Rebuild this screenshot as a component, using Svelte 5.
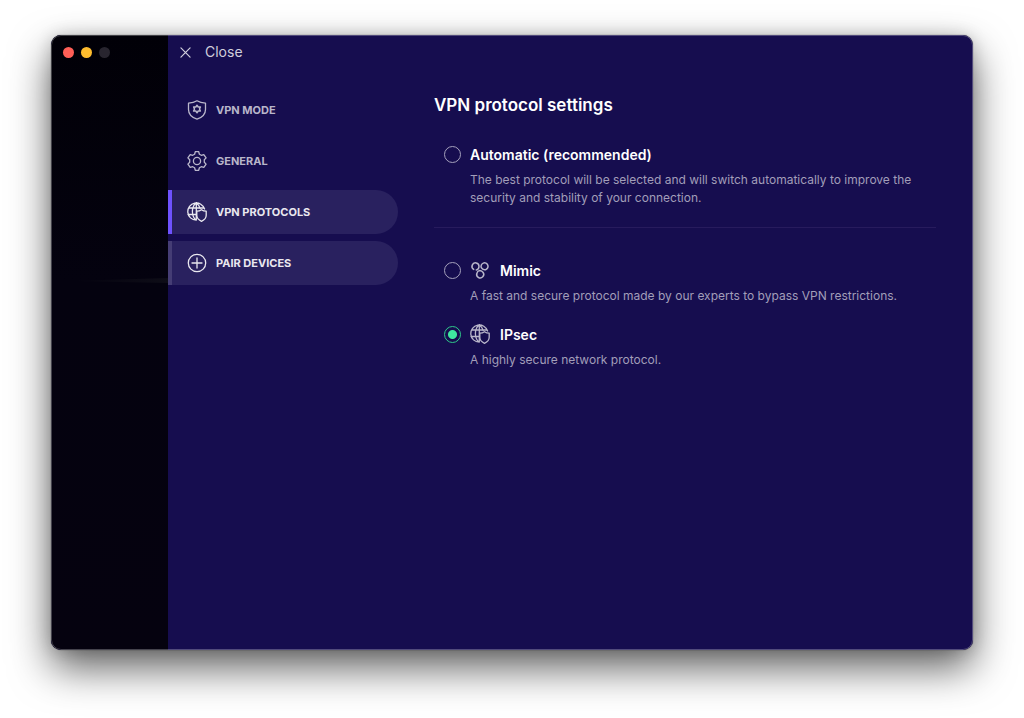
<script>
  const navItems = [
    { id: "mode", label: "VPN mode", icon: "shield" },
    { id: "general", label: "General", icon: "gear" },
    { id: "protocols", label: "VPN protocols", icon: "globe" },
    { id: "pair", label: "Pair devices", icon: "plus" },
  ];

  const protocols = [
    {
      id: "mimic",
      name: "Mimic",
      description:
        "A fast and secure protocol made by our experts to bypass VPN restrictions.",
    },
    {
      id: "ipsec",
      name: "IPsec",
      description: "A highly secure network protocol.",
    },
  ];

  let page = $state("protocols");
  let selected = $state("ipsec");
</script>

{#snippet globe()}
  <svg class="icon" viewBox="0 0 20 20" aria-hidden="true">
    <path
      d="M9.200 18.200A8.600 8.600 0 1 1 17.600 7M9 .9C6.400 3 5.400 6 5.400 9.500s.9 6 3.100 8.300M9.500.9c2 1.700 3.200 3.500 3.700 5.600M9.300 1v17M1.700 6h15.200M1 12.500h8"
    />
    <path d="M14.500 7.700c1.400 1 2.900 1.400 4.700 1.400v4.200c0 2.800-1.900 4.800-4.700 6-2.800-1.200-4.700-3.200-4.700-6V9.100c1.800 0 3.300-.4 4.700-1.400z" />
  </svg>
{/snippet}

<div class="window">
  <aside class="backdrop">
    <div class="lights">
      <button class="light red" aria-label="Close window"></button>
      <button class="light yellow" aria-label="Minimize window"></button>
      <button class="light off" aria-label="Zoom window" disabled></button>
    </div>
    <div class="glow"></div>
  </aside>

  <div class="panel">
    <header>
      <button class="close">
        <svg viewBox="0 0 12 12" aria-hidden="true">
          <path d="M1 1l10 10M11 1L1 11" />
        </svg>
        Close
      </button>
    </header>

    <div class="body">
      <nav>
        {#each navItems as item}
          <button
            class="nav-item"
            class:active={page === item.id}
            class:hover={item.id === "pair"}
            onclick={() => (page = item.id)}
          >
            {#if item.icon === "shield"}
              <svg class="icon" viewBox="0 0 20 20" aria-hidden="true">
                <path d="M10 .8c2.500 1.600 5.200 2.200 8.500 2.300v6.400c0 4.800-3.200 7.900-8.500 9.700-5.300-1.800-8.500-4.900-8.500-9.700V3.100C4.800 3 7.500 2.400 10 .8z" />
                <path class="bold" d="M10 5.300l1.200 1.700 2.200-.1-.9 2.100.9 2.100-2.200-.1L10 12.700 8.800 11l-2.200.1.9-2.100-.9-2.100 2.200.1z" />
              </svg>
            {:else if item.icon === "gear"}
              <svg class="icon" viewBox="0 0 20 20" aria-hidden="true">
                <path d="M8.300.7h3.400l.7 2.500 1.900 1.100 2.500-.7 2.300 3.300-1.800 1.900v2.400l1.800 1.900-2.300 3.300-2.500-.7-1.900 1.100-.7 2.500H8.300l-.7-2.500-1.900-1.100-2.500.7L.9 13.100l1.800-1.900V8.800L.9 6.900l2.300-3.300 2.500.7 1.900-1.100z" />
                <circle cx="10" cy="10" r="3.600" />
              </svg>
            {:else if item.icon === "globe"}
              {@render globe()}
            {:else}
              <svg class="icon" viewBox="0 0 20 20" aria-hidden="true">
                <circle cx="10" cy="10" r="8.700" />
                <path d="M10 5v10M5 10h10" />
              </svg>
            {/if}
            {item.label}
          </button>
        {/each}
      </nav>

      <main>
        <h1>VPN protocol settings</h1>

        <div class="option">
          <input
            type="radio"
            id="automatic"
            name="protocol"
            value="automatic"
            bind:group={selected}
          />
          <label for="automatic">Automatic (recommended)</label>
          <p>
            The best protocol will be selected and will switch automatically to
            improve the security and stability of your connection.
          </p>
        </div>

        <hr />

        {#each protocols as protocol}
          <div class="option">
            <input
              type="radio"
              id={protocol.id}
              name="protocol"
              value={protocol.id}
              bind:group={selected}
            />
            <label for={protocol.id}>
              {#if protocol.id === "mimic"}
                <svg class="icon" viewBox="0 0 20 20" aria-hidden="true">
                  <path class="bold" d="M3.700 9.400A3.500 3.500 0 1 1 9 6.600Q9 9.500 6.300 9.900M11.300 7.700A3.500 3.500 0 1 1 15.600 9.700Q12.600 10.200 11.300 7.700M9.800 10.500Q7.500 10.700 7 13A3.500 3.500 0 1 0 13 12.300Q12 10.700 9.800 10.500" />
                </svg>
              {:else}
                {@render globe()}
              {/if}
              {protocol.name}
            </label>
            <p>{protocol.description}</p>
          </div>
        {/each}
      </main>
    </div>
  </div>
</div>

<style>
  :global(body) {
    background: #fff;
    font-family: Inter, "Open Sans", sans-serif;
  }

  button {
    border: 0;
    background: none;
    font: inherit;
    cursor: pointer;
  }

  svg {
    fill: none;
    stroke: currentColor;
    stroke-width: 1.3;
    stroke-linecap: round;
    stroke-linejoin: round;
    flex: none;
  }

  .window {
    box-sizing: border-box;
    display: flex;
    min-height: calc(100vh - 103px);
    margin: 35px 51px 68px;
    border-radius: 10px;
    overflow: hidden;
    background: #160d4f;
    box-shadow:
      0 0 1px rgba(0, 0, 0, 0.8),
      0 0 16px rgba(0, 0, 0, 0.16),
      0 18px 40px rgba(0, 0, 0, 0.62);
    position: relative;
  }

  .window::after {
    content: "";
    position: absolute;
    inset: 0;
    border: 1px solid rgba(255, 255, 255, 0.26);
    border-radius: 10px;
    pointer-events: none;
  }

  .backdrop {
    flex: 0 0 117px;
    background: linear-gradient(#010007, #04020f 40%, #05020f);
  }

  .lights {
    display: flex;
    gap: 7px;
    padding: 12px;
  }

  .light {
    width: 11px;
    height: 11px;
    padding: 0;
    border-radius: 50%;
  }

  .red {
    background: #ff5f57;
  }

  .yellow {
    background: #febc2e;
  }

  .off {
    background: #28252f;
  }

  .glow {
    height: 5px;
    margin: 208px 0 0 16px;
    background: linear-gradient(90deg, transparent, #0e0d17);
    clip-path: polygon(0 60%, 100% 0, 100% 100%);
  }

  .panel {
    flex: 1;
    min-width: 0;
    color: #fff;
  }

  header {
    height: 34px;
    display: flex;
    align-items: center;
    padding-left: 12px;
  }

  .close {
    display: flex;
    align-items: center;
    gap: 14px;
    padding: 0;
    color: #d0cedc;
    font-size: 14px;
    line-height: 20px;
  }

  .close svg {
    width: 11px;
    height: 11px;
  }

  .body {
    display: flex;
    gap: 36px;
    padding: 19px 37px 32px 0;
  }

  nav {
    flex: 0 0 230px;
    display: flex;
    flex-direction: column;
    gap: 7px;
  }

  .nav-item {
    display: flex;
    align-items: center;
    gap: 9px;
    height: 44px;
    padding: 0 16px 1px 15px;
    border-left: 4px solid transparent;
    border-radius: 0 22px 22px 0;
    color: #b9b6ca;
    font-size: 11px;
    font-weight: 700;
    text-align: left;
    text-transform: uppercase;
  }

  .active,
  .hover {
    border-left-color: #453d75;
    background: #29215f;
    color: #e9e8ef;
  }

  .active {
    border-left-color: #6e52ff;
  }

  .icon {
    width: 20px;
    height: 20px;
  }

  .bold {
    stroke-width: 1.5;
  }

  main {
    flex: 1;
    min-width: 0;
  }

  h1 {
    margin: 5px 0 25px;
    font-size: 17px;
    line-height: 24px;
    font-weight: 600;
  }

  .option {
    display: grid;
    grid-template-columns: 17px 1fr;
    column-gap: 9px;
    row-gap: 5px;
    align-items: center;
    padding-left: 10px;
  }

  .option + .option {
    margin-top: 17px;
  }

  input {
    appearance: none;
    box-sizing: border-box;
    width: 17px;
    height: 17px;
    margin: 0;
    border: 1px solid #a5a1bc;
    border-radius: 50%;
  }

  input:checked {
    border-color: #2fc98b;
    background: radial-gradient(circle, #3fe8a0 4px, transparent 5px);
  }

  label {
    display: flex;
    align-items: center;
    gap: 10px;
    height: 24px;
    font-size: 14px;
    font-weight: 600;
  }

  label .icon {
    color: #b9b6ca;
  }

  p {
    grid-column: 2;
    margin: 0;
    color: #a29eb9;
    font-size: 12px;
    line-height: 18px;
  }

  hr {
    height: 1px;
    margin: 20px 0 30px;
    border: 0;
    background: #271b5d;
  }
</style>
